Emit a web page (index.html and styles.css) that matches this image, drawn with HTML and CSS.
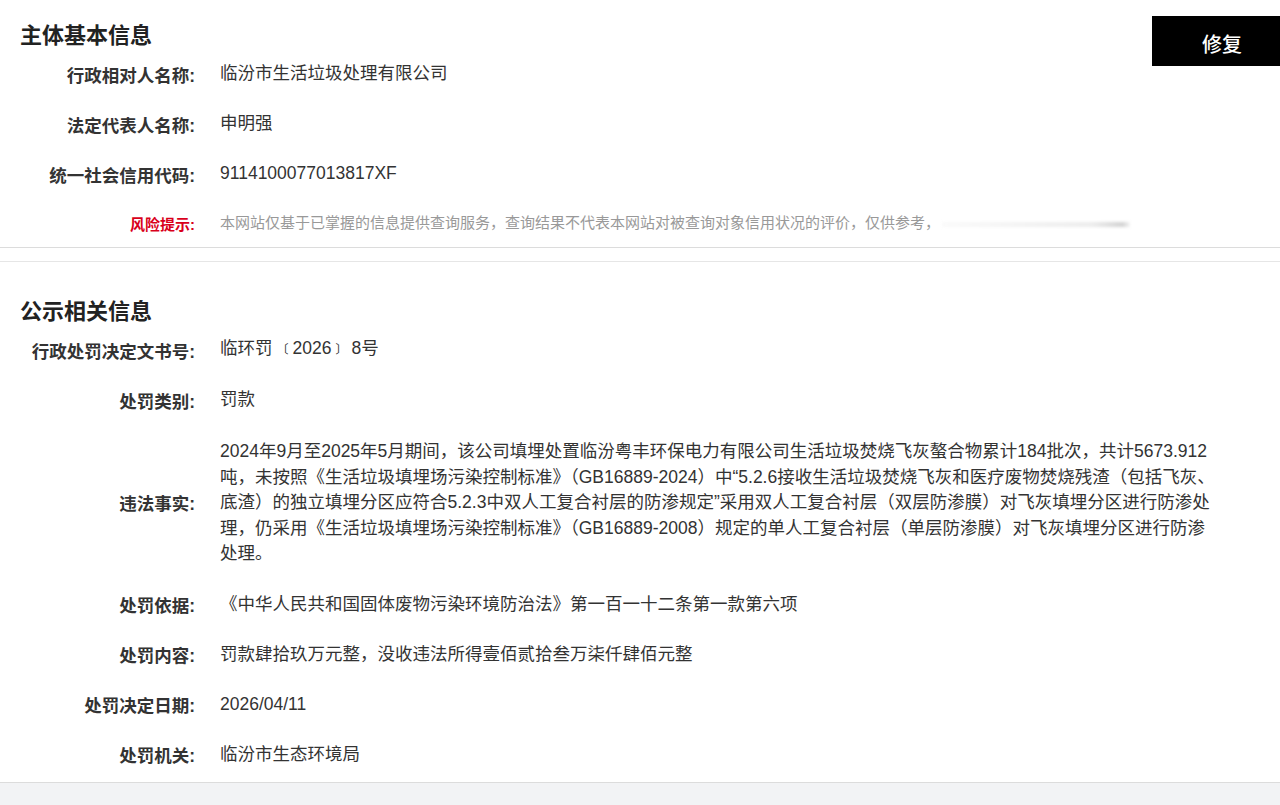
FILE: index.html
```html
<!DOCTYPE html>
<html lang="zh-CN">
<head>
    <meta charset="UTF-8">
    <meta name="viewport" content="width=device-width, initial-scale=1.0">
    <title>行政处罚信息</title>
    <link rel="stylesheet" href="styles.css">
</head>
<body>
    <button class="fix-btn">修复</button>

    <!-- 主体基本信息 -->
    <div class="section basic">
        <h2 class="section-title">主体基本信息</h2>
        <div class="row">
            <div class="label">行政相对人名称:</div>
            <div class="value">临汾市生活垃圾处理有限公司</div>
        </div>
        <div class="row">
            <div class="label">法定代表人名称:</div>
            <div class="value">申明强</div>
        </div>
        <div class="row">
            <div class="label">统一社会信用代码:</div>
            <div class="value">9114100077013817XF</div>
        </div>
        <div class="row risk">
            <div class="label">风险提示:</div>
            <div class="value">本网站仅基于已掌握的信息提供查询服务，查询结果不代表本网站对被查询对象信用状况的评价，仅供参考，<span class="fade"></span></div>
        </div>
    </div>

    <!-- 公示相关信息 -->
    <div class="section public">
        <h2 class="section-title">公示相关信息</h2>
        <div class="row">
            <div class="label">行政处罚决定文书号:</div>
            <div class="value">临环罚<span class="bracket">〔</span>2026<span class="bracket">〕</span>8号</div>
        </div>
        <div class="row">
            <div class="label">处罚类别:</div>
            <div class="value">罚款</div>
        </div>
        <div class="row tall">
            <div class="label">违法事实:</div>
            <div class="value">2024年9月至2025年5月期间，该公司填埋处置临汾粤丰环保电力有限公司生活垃圾焚烧飞灰螯合物累计184批次，共计5673.912吨，未按照《生活垃圾填埋场污染控制标准》（GB16889-2024）中“5.2.6接收生活垃圾焚烧飞灰和医疗废物焚烧残渣（包括飞灰、底渣）的独立填埋分区应符合5.2.3中双人工复合衬层的防渗规定”采用双人工复合衬层（双层防渗膜）对飞灰填埋分区进行防渗处理，仍采用《生活垃圾填埋场污染控制标准》（GB16889-2008）规定的单人工复合衬层（单层防渗膜）对飞灰填埋分区进行防渗处理。</div>
        </div>
        <div class="row">
            <div class="label">处罚依据:</div>
            <div class="value">《中华人民共和国固体废物污染环境防治法》第一百一十二条第一款第六项</div>
        </div>
        <div class="row">
            <div class="label">处罚内容:</div>
            <div class="value">罚款肆拾玖万元整，没收违法所得壹佰贰拾叁万柒仟肆佰元整</div>
        </div>
        <div class="row">
            <div class="label">处罚决定日期:</div>
            <div class="value">2026/04/11</div>
        </div>
        <div class="row">
            <div class="label">处罚机关:</div>
            <div class="value">临汾市生态环境局</div>
        </div>
    </div>

    <div class="footer-band"></div>
</body>
</html>
```

FILE: styles.css
```css
body {
    margin: 0;
    background-color: #fff;
    color: #333;
    font-family: "Liberation Sans", "Noto Sans CJK SC", sans-serif;
    position: relative;
}
.fix-btn {
    position: absolute;
    top: 16px;
    right: 0;
    width: 128px;
    height: 50px;
    background-color: #000;
    color: #fff;
    border: none;
    font-family: "Noto Sans CJK SC", sans-serif;
    font-size: 20px;
    font-weight: 500;
    padding: 4px 0 0 12px;
    cursor: pointer;
}
.section {
    padding: 18px 0 0 0;
}
.section.basic {
    border-bottom: 1px solid #dcdcdc;
}
.section.public {
    margin-top: 13px;
    border-top: 1px solid #e6e6e6;
    padding-top: 32px;
    border-bottom: 1px solid #dcdcdc;
    padding-bottom: 2px;
}
.section-title {
    margin: 0 0 1px 20px;
    font-family: "Noto Sans CJK SC", sans-serif;
    font-size: 22px;
    line-height: 30px;
    font-weight: bold;
    color: #222;
}
.row {
    display: grid;
    grid-template-columns: 195px 1fr;
    column-gap: 25px;
    align-items: center;
    min-height: 50px;
    font-size: 17.5px;
}
.row.risk {
    min-height: 48px;
    font-size: 15px;
}
.row.tall {
    padding: 14px 0 13px 0;
}
.label {
    text-align: right;
    font-weight: bold;
    color: #333;
}
.value {
    color: #333;
    line-height: 25.5px;
    padding-right: 58px;
}
.risk .label {
    color: #d9001b;
}
.risk .value {
    color: #999;
}
.bracket {
    font-size: 12px;
    margin: 0 4px;
}
.fade {
    display: inline-block;
    width: 188px;
    height: 5px;
    margin-left: 2px;
    vertical-align: middle;
    background: linear-gradient(to right, #fafafa, #ececec 80%, #d2d2d2 96%, #f4f4f4);
    filter: blur(1.5px);
}
.footer-band {
    height: 22px;
    background-color: #f2f3f5;
}
```
